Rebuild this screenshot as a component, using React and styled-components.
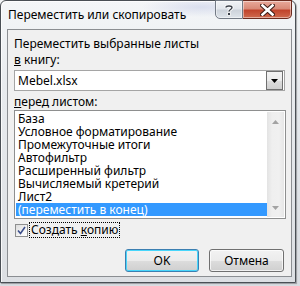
import React from "react";
import styled, { createGlobalStyle } from "styled-components";

const GlobalStyle = createGlobalStyle`
  html, body {
    margin: 0;
    padding: 0;
    background: #dfe3e8;
  }
  body {
    font-family: "Noto Sans", "Open Sans", sans-serif;
    font-size: 12px;
    color: #000;
  }
`;

const Screen = styled.div`
  width: 300px;
  height: 286px;
  overflow: hidden;
  background: linear-gradient(180deg, #f2f4f6 0%, #e4e8ec 40%, #d9dde2 100%);
`;

const Window = styled.div`
  width: 296px;
  height: 283px;
  border: 1px solid #4a4f55;
  border-radius: 6px 6px 0 0;
  box-sizing: border-box;
  display: flex;
  flex-direction: column;
  padding: 0 3px 5px 6px;
  background:
    radial-gradient(ellipse 60px 10px at 200px 6px, rgba(170, 180, 220, 0.35), transparent),
    linear-gradient(180deg, #f4f6f8 0%, #e8ebee 30%, #dcdfe3 100%);
  box-shadow: inset 1px 1px 0 rgba(255, 255, 255, 0.8), 1px 1px 1px rgba(0, 0, 0, 0.3);
`;

const TitleBar = styled.div`
  height: 28px;
  display: flex;
  align-items: flex-start;
  justify-content: space-between;
`;

const Title = styled.span`
  padding: 6px 0 0 1px;
  font-size: 12px;
  line-height: 16px;
`;

const Caption = styled.div`
  display: flex;
  margin-top: -1px;
`;

const CaptionButton = styled.div`
  height: 19px;
  width: ${(p) => p.$w}px;
  box-sizing: border-box;
  border: 1px solid ${(p) => (p.$close ? "#6b2a1e" : "#737a85")};
  border-radius: ${(p) => (p.$close ? "0 0 5px 0" : "0 0 0 5px")};
  ${(p) => (p.$close ? "border-left: none;" : "")}
  display: flex;
  align-items: center;
  justify-content: center;
  background: ${(p) =>
    p.$close
      ? "linear-gradient(180deg, #e9a99a 0%, #d98a78 45%, #c1442c 55%, #cf6a4e 100%)"
      : "linear-gradient(180deg, #f1f3f6 0%, #e2e6ec 45%, #cdd3db 55%, #dfe4ea 100%)"};
  box-shadow: inset 0 0 0 1px rgba(255, 255, 255, 0.45);
`;

const Client = styled.div`
  flex: 1;
  border: 1px solid #8b8e92;
  background: #f0f0f0;
  padding: 6px 6px 0 6px;
  display: flex;
  flex-direction: column;
`;

const Label = styled.div`
  line-height: 16px;
  height: 16px;
  margin-top: ${(p) => p.$gap || 0}px;
  white-space: nowrap;
`;

const Combo = styled.div`
  margin-top: 2px;
  height: 21px;
  box-sizing: border-box;
  border: 1px solid #a5a5a5;
  background: #fff;
  display: flex;
  align-items: center;
  justify-content: space-between;
  padding: 0 1px 0 3px;
`;

const DropButton = styled.div`
  width: 17px;
  height: 19px;
  box-sizing: border-box;
  border: 1px solid #707070;
  background: linear-gradient(180deg, #f3f3f3 0%, #ebebeb 50%, #dddddd 51%, #cfcfcf 100%);
  display: flex;
  align-items: center;
  justify-content: center;
`;

const ListBox = styled.div`
  height: 109px;
  width: 272px;
  box-sizing: border-box;
  border: 1px solid #8e8f8f;
  background: #fff;
  display: flex;
  padding: 1px;
`;

const Items = styled.div`
  flex: 1;
  display: flex;
  flex-direction: column;
`;

const Item = styled.div`
  height: 13px;
  line-height: 13px;
  padding-left: 2px;
  white-space: nowrap;
  background: ${(p) => (p.$selected ? "#3399ff" : "transparent")};
  color: ${(p) => (p.$selected ? "#fff" : "#000")};
`;

const ScrollBar = styled.div`
  width: 17px;
  background: linear-gradient(90deg, #e3e3e3 0%, #efefef 30%, #f0f0f0 70%, #e6e6e6 100%);
  display: flex;
  flex-direction: column;
  justify-content: space-between;
  align-items: center;
  padding: 8px 0 7px;
`;

const CheckRow = styled.div`
  margin-top: 3px;
  display: flex;
  align-items: center;
  height: 16px;
  padding-left: 1px;
`;

const CheckBox = styled.div`
  width: 13px;
  height: 13px;
  box-sizing: border-box;
  border: 1px solid #8e8f8f;
  background: linear-gradient(135deg, #dcdcdc 0%, #f4f4f4 60%, #ffffff 100%);
  display: flex;
  align-items: center;
  justify-content: center;
`;

const CheckLabel = styled.span`
  margin-left: 1px;
  border: 1px dotted #000;
  padding: 0 1px;
  line-height: 14px;
  height: 14px;
`;

const ButtonRow = styled.div`
  margin-top: 11px;
  display: flex;
  justify-content: flex-end;
  gap: 10px;
  padding-right: 1px;
`;

const Button = styled.div`
  width: ${(p) => p.$w}px;
  height: 23px;
  box-sizing: border-box;
  border: 1px solid ${(p) => (p.$default ? "#3c7fb1" : "#707070")};
  border-radius: 3px;
  background: linear-gradient(180deg, #f2f2f2 0%, #ebebeb 50%, #dddddd 51%, #cfcfcf 100%);
  box-shadow: inset 0 0 0 1px ${(p) => (p.$default ? "#48d6fb" : "rgba(255,255,255,0.7)")};
  display: flex;
  align-items: center;
  justify-content: center;
  line-height: 14px;
`;

const sheets = [
  "База",
  "Условное форматирование",
  "Промежуточные итоги",
  "Автофильтр",
  "Расширенный фильтр",
  "Вычисляемый кретерий",
  "Лист2",
  "(переместить в конец)",
];

export default function App() {
  return (
    <>
      <GlobalStyle />
      <Screen>
        <Window>
          <TitleBar>
            <Title>Переместить или скопировать</Title>
            <Caption>
              <CaptionButton $w={28}>
                <svg width="10" height="12" viewBox="0 0 10 12">
                  <path
                    d="M2 3.5 C2 1.5 8 1.5 8 3.5 C8 5.5 5 5.5 5 7.5"
                    fill="none"
                    stroke="#fff"
                    strokeWidth="3.2"
                  />
                  <path
                    d="M2 3.5 C2 1.5 8 1.5 8 3.5 C8 5.5 5 5.5 5 7.5"
                    fill="none"
                    stroke="#3a3f48"
                    strokeWidth="1.4"
                  />
                  <rect x="3.6" y="8.6" width="2.8" height="2.8" fill="#3a3f48" stroke="#fff" strokeWidth="0.8" />
                </svg>
              </CaptionButton>
              <CaptionButton $w={49} $close>
                <svg width="15" height="12" viewBox="0 0 15 12">
                  <path d="M2.5 1.5 L12.5 10.5 M12.5 1.5 L2.5 10.5" stroke="#3b1a14" strokeWidth="4.6" strokeLinecap="square" />
                  <path d="M2.5 1.5 L12.5 10.5 M12.5 1.5 L2.5 10.5" stroke="#fff" strokeWidth="2.6" strokeLinecap="square" />
                </svg>
              </CaptionButton>
            </Caption>
          </TitleBar>
          <Client>
            <Label>Переместить выбранные листы</Label>
            <Label>
              <u>в</u> книгу:
            </Label>
            <Combo>
              <span>Mebel.xlsx</span>
              <DropButton>
                <svg width="7" height="4" viewBox="0 0 7 4">
                  <path d="M0 0 H7 L3.5 4 Z" fill="#000" />
                </svg>
              </DropButton>
            </Combo>
            <Label $gap={3}>
              <u>п</u>еред листом:
            </Label>
            <ListBox>
              <Items>
                {sheets.map((s, i) => (
                  <Item key={s} $selected={i === sheets.length - 1}>
                    {s}
                  </Item>
                ))}
              </Items>
              <ScrollBar>
                <svg width="7" height="4" viewBox="0 0 7 4">
                  <path d="M0 4 H7 L3.5 0 Z" fill="#a3a3a3" />
                </svg>
                <svg width="7" height="4" viewBox="0 0 7 4">
                  <path d="M0 0 H7 L3.5 4 Z" fill="#a3a3a3" />
                </svg>
              </ScrollBar>
            </ListBox>
            <CheckRow>
              <CheckBox>
                <svg width="9" height="9" viewBox="0 0 9 9">
                  <path d="M1 4.5 L3.5 7.5 L8 1" fill="none" stroke="#3c4f8c" strokeWidth="1.6" />
                </svg>
              </CheckBox>
              <CheckLabel>
                Создать <u>к</u>опию
              </CheckLabel>
            </CheckRow>
            <ButtonRow>
              <Button $w={74} $default>
                OK
              </Button>
              <Button $w={75}>Отмена</Button>
            </ButtonRow>
          </Client>
        </Window>
      </Screen>
    </>
  );
}
